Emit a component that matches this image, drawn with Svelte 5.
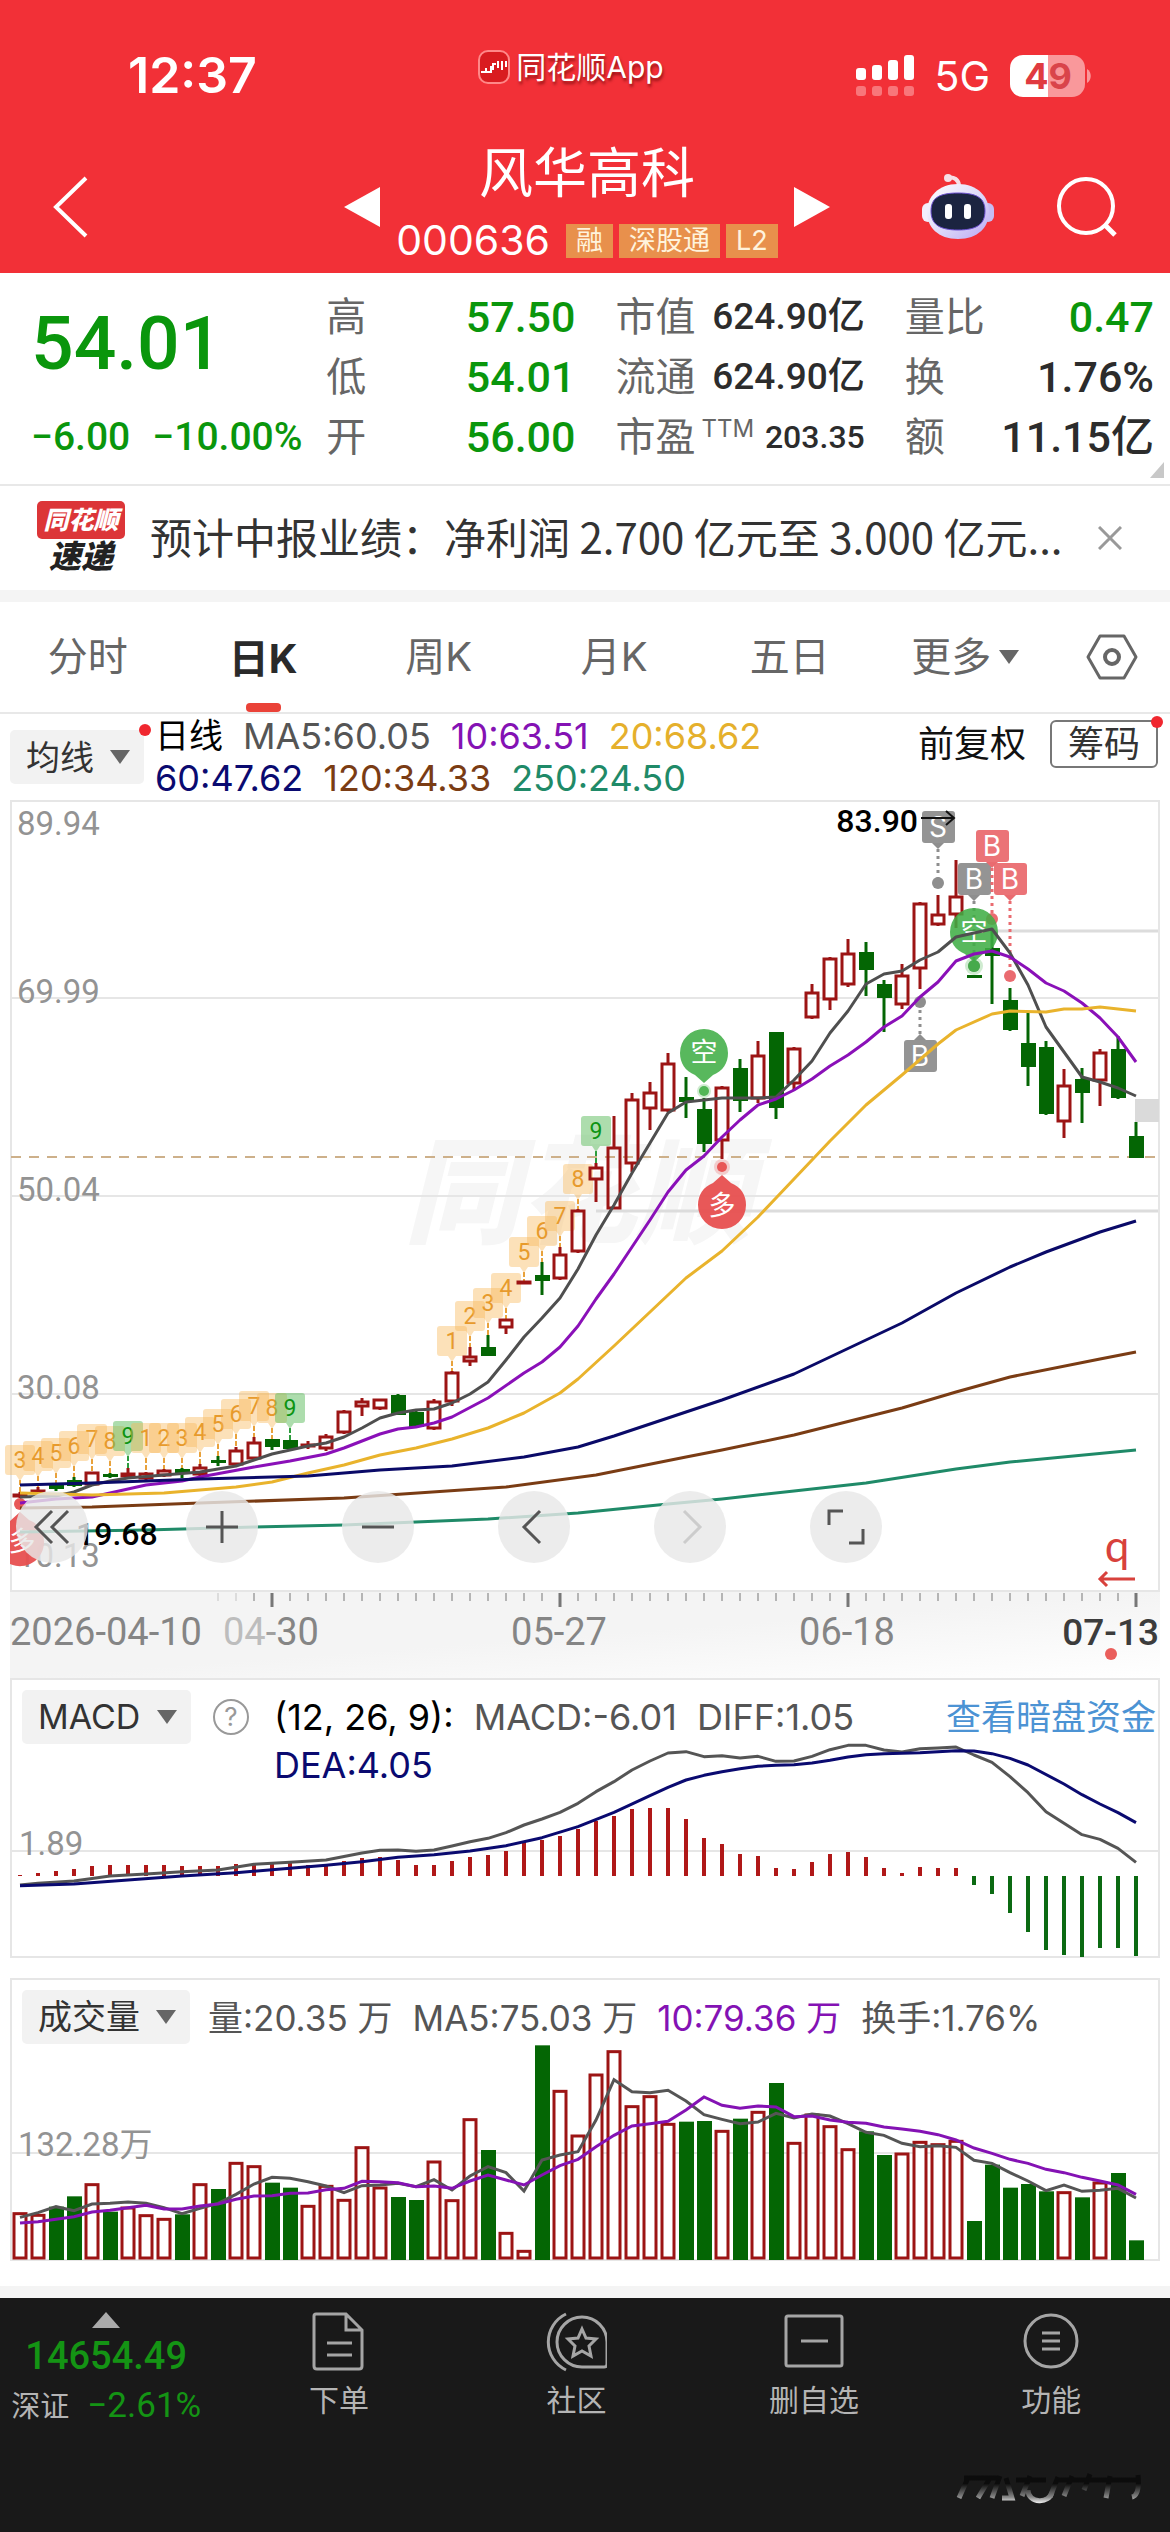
<script>
    const green = '#046604';
    const red = '#9c1414';

    const stats = [
        [
            { label: '高', value: '57.50', cls: 'down' },
            { label: '低', value: '54.01', cls: 'down' },
            { label: '开', value: '56.00', cls: 'down' }
        ],
        [
            { label: '市值', value: '624.90亿', cls: 'mid' },
            { label: '流通', value: '624.90亿', cls: 'mid' },
            { label: '市盈', sup: 'TTM', value: '203.35', cls: 'small' }
        ],
        [
            { label: '量比', value: '0.47', cls: 'down' },
            { label: '换', value: '1.76%', cls: '' },
            { label: '额', value: '11.15亿', cls: '' }
        ]
    ];

    const tabs = ['分时', '日K', '周K', '月K', '五日'];
    let activeTab = '日K';

    // x of the day with index i
    const x = (i) => 20 + i * 18;

    // direction, high, body top, body bottom, low
    const candles = [
        ['r', 692, 694, 697, 698], ['r', 687, 690, 693, 694], ['g', 683, 685, 689, 691],
        ['g', 677, 680, 686, 687], ['r', 672, 672, 685, 685], ['g', 673, 674, 677, 678],
        ['r', 668, 673, 677, 678], ['r', 672, 673, 679, 680], ['r', 669, 670, 676, 677],
        ['g', 668, 669, 674, 678], ['r', 664, 667, 675, 676], ['g', 656, 660, 663, 666],
        ['r', 647, 650, 665, 666], ['r', 637, 642, 659, 659], ['g', 639, 639, 647, 650],
        ['g', 640, 640, 649, 650], ['r', 641, 644, 647, 649], ['r', 634, 636, 649, 651],
        ['r', 610, 611, 633, 634], ['r', 598, 601, 607, 616], ['r', 599, 599, 609, 610],
        ['g', 594, 595, 615, 615], ['g', 611, 612, 627, 627], ['r', 599, 601, 629, 630],
        ['r', 571, 572, 602, 606], ['r', 547, 556, 562, 566], ['g', 535, 547, 556, 556],
        ['r', 519, 519, 528, 534], ['r', 481, 481, 484, 484], ['g', 462, 475, 481, 495],
        ['r', 447, 454, 479, 480], ['r', 409, 410, 452, 453], ['r', 363, 367, 380, 402],
        ['r', 316, 347, 409, 409], ['r', 293, 299, 364, 372], ['r', 282, 292, 309, 330],
        ['r', 253, 263, 311, 312], ['g', 277, 297, 302, 318], ['g', 298, 309, 344, 352],
        ['r', 286, 287, 341, 359], ['g', 259, 268, 301, 312], ['r', 241, 255, 299, 303],
        ['g', 232, 232, 308, 319], ['r', 247, 248, 284, 290], ['r', 184, 192, 218, 219],
        ['r', 157, 158, 200, 210], ['r', 139, 153, 185, 187], ['g', 142, 152, 170, 196],
        ['g', 180, 184, 198, 232], ['r', 164, 175, 205, 209], ['r', 102, 103, 169, 189],
        ['r', 95, 114, 125, 126], ['r', 60, 96, 115, 128], ['g', 175, 175, 178, 178],
        ['g', 130, 148, 156, 204], ['g', 188, 200, 230, 231], ['g', 213, 243, 267, 286],
        ['g', 241, 247, 314, 315], ['r', 269, 285, 322, 338], ['g', 268, 279, 293, 323],
        ['r', 249, 252, 281, 306], ['g', 236, 249, 298, 299], ['g', 322, 336, 358, 358]
    ];

    // moving averages, [index, y]
    const ma5 = [[0, 697], [2, 696], [3, 692], [4, 685], [5, 681], [6, 678], [8, 675], [10, 672], [11, 669], [12, 666], [13, 660], [14, 654], [15, 650], [16, 646], [17, 643], [18, 637], [19, 628], [20, 618], [21, 613], [22, 610], [23, 609], [24, 603], [25, 594], [26, 582], [27, 560], [28, 537], [29, 518], [30, 498], [31, 469], [32, 435], [33, 405], [34, 373], [35, 343], [36, 313], [37, 302], [38, 300], [39, 298], [41, 298], [42, 297], [43, 280], [44, 261], [45, 233], [46, 211], [47, 184], [48, 174], [49, 171], [50, 160], [51, 152], [52, 137], [53, 133], [54, 129], [55, 153], [56, 185], [57, 227], [58, 252], [59, 277], [60, 282], [61, 288], [62, 296]];
    const ma10 = [[0, 703], [2, 699], [4, 697], [5, 693], [7, 685], [9, 681], [10, 677], [13, 667], [15, 661], [17, 654], [18, 648], [20, 634], [21, 629], [22, 627], [23, 623], [24, 617], [26, 598], [28, 573], [29, 562], [30, 547], [31, 526], [32, 499], [33, 474], [34, 447], [35, 420], [36, 392], [37, 370], [38, 356], [39, 337], [40, 320], [41, 305], [42, 299], [43, 290], [44, 279], [45, 266], [46, 255], [47, 242], [48, 227], [49, 216], [50, 197], [51, 182], [52, 161], [53, 154], [54, 151], [55, 157], [56, 169], [57, 183], [58, 191], [59, 203], [60, 218], [61, 237], [62, 262]];
    const ma20 = [[0, 693], [4, 695], [8, 693], [12, 687], [14, 682], [16, 673], [18, 665], [20, 655], [22, 648], [24, 639], [26, 628], [28, 613], [30, 593], [31, 579], [33, 546], [35, 512], [37, 478], [39, 451], [41, 417], [42, 398], [44, 360], [45, 341], [47, 305], [49, 275], [51, 244], [52, 230], [54, 214], [55, 211], [57, 212], [58, 209], [59, 209], [60, 207], [61, 209], [62, 211]];
    const ma60 = [[0, 685], [4, 683], [10, 679], [16, 676], [20, 670], [24, 666], [28, 657], [31, 647], [33, 636], [37, 612], [39, 600], [43, 574], [47, 540], [49, 523], [52, 493], [55, 467], [57, 452], [60, 432], [62, 421]];
    const ma120 = [[0, 708], [4, 707], [10, 703], [18, 698], [27, 687], [32, 675], [37, 657], [39, 650], [43, 635], [49, 608], [52, 592], [55, 577], [60, 559], [62, 552]];
    const ma250 = [[0, 732], [7, 730], [13, 727], [18, 725], [26, 719], [31, 713], [36, 704], [39, 699], [43, 691], [47, 683], [52, 669], [55, 662], [62, 650]];

    const averages = [
        { color: '#4f4f4f', data: ma5 },
        { color: '#8a10b8', data: ma10 },
        { color: '#e9b32c', data: ma20 },
        { color: '#0a0a68', data: ma60 },
        { color: '#7a3c14', data: ma120 },
        { color: '#1f8a68', data: ma250 }
    ];

    // nine-turn counters: index, digit, y
    const counters = [
        [0, 3, 660], [1, 4, 656], [2, 5, 653], [3, 6, 646], [4, 7, 639], [5, 8, 641], [6, 9, 636],
        [7, 1, 638], [8, 2, 638], [9, 3, 638], [10, 4, 632], [11, 5, 624], [12, 6, 614], [13, 7, 606], [14, 8, 608], [15, 9, 608],
        [24, 1, 541], [25, 2, 516], [26, 3, 503], [27, 4, 488], [28, 5, 452], [29, 6, 431], [30, 7, 416], [31, 8, 379], [32, 9, 331]
    ];

    // trades: index, letter, box top, dot y, colour
    const trades = [
        [51, 'S', 11, 83, '#8e8e8e'],
        [53, 'B', 63, 166, '#8e8e8e'],
        [54, 'B', 30, 119, '#ea6b70'],
        [55, 'B', 63, 176, '#ea6b70'],
        [50, 'B', 240, 202, '#8e8e8e']
    ];

    const macd = [1, 3, 5, 7, 10, 11, 11, 11, 11, 10, 10, 10, 12, 13, 12, 13, 11, 11, 15, 18, 19, 16, 11, 11, 15, 19, 21, 25, 34, 36, 40, 47, 55, 60, 67, 68, 68, 57, 38, 32, 22, 20, 8, 7, 14, 22, 24, 19, 8, 3, 9, 8, 8, -9, -18, -37, -56, -74, -79, -81, -72, -72, -80];
    const diff = [[0, 615], [1, 610], [3, 603], [5, 588], [7, 582], [9, 575], [11, 570], [13, 553], [15, 547], [17, 540], [19, 519], [20, 511], [21, 510], [22, 514], [23, 510], [24, 498], [25, 485], [26, 475], [27, 458], [28, 435], [29, 417], [30, 397], [31, 370], [32, 335], [33, 305], [34, 270], [35, 243], [36, 219], [37, 215], [38, 230], [39, 227], [40, 234], [41, 229], [42, 244], [43, 243], [44, 229], [45, 209], [46, 196], [47, 196], [48, 210], [49, 216], [50, 206], [51, 204], [52, 201], [53, 225], [54, 247], [55, 290], [56, 338], [57, 395], [58, 430], [59, 464], [60, 478], [61, 505], [62, 547]];
    const dea = [[0, 617], [3, 612], [6, 600], [9, 588], [12, 578], [15, 565], [17, 556], [19, 545], [21, 532], [23, 524], [25, 513], [27, 497], [29, 473], [31, 440], [33, 397], [35, 347], [36, 322], [37, 300], [38, 286], [39, 275], [40, 266], [41, 259], [42, 256], [43, 254], [44, 249], [45, 241], [46, 231], [47, 224], [48, 221], [50, 218], [52, 212], [53, 213], [54, 221], [55, 235], [56, 255], [58, 312], [59, 344], [60, 372], [61, 398], [62, 428]];

    const volume = [728, 733, 710, 679, 641, 725, 711, 734, 745, 733, 641, 657, 577, 587, 638, 653, 706, 646, 688, 530, 651, 681, 690, 573, 689, 446, 540, 787, 841, 226, 361, 495, 312, 242, 407, 377, 460, 455, 453, 481, 446, 424, 339, 517, 432, 467, 536, 484, 555, 549, 514, 521, 511, 753, 584, 653, 642, 664, 665, 682, 636, 609, 811];
    const vol5 = [742, 728, 710, 722, 702, 700, 696, 700, 713, 731, 715, 700, 673, 642, 622, 625, 635, 648, 668, 647, 645, 640, 650, 629, 660, 618, 590, 608, 663, 570, 555, 545, 450, 329, 365, 368, 361, 393, 434, 448, 461, 456, 430, 444, 432, 438, 461, 487, 496, 520, 530, 527, 532, 571, 580, 608, 633, 662, 645, 664, 661, 655, 684];
    const vol10 = [759, 755, 748, 740, 726, 721, 713, 706, 717, 717, 708, 702, 688, 678, 677, 670, 669, 659, 655, 634, 635, 638, 650, 648, 655, 633, 615, 630, 645, 615, 587, 568, 530, 496, 468, 461, 454, 420, 381, 406, 415, 408, 411, 440, 438, 450, 457, 460, 471, 477, 484, 494, 510, 534, 550, 568, 580, 598, 608, 622, 633, 645, 673];

    const macdY = (v) => 2 + v / 3;
    const volY = (v) => v / 3 - 8;

    const line = (data, y = (v) => v) => data.map(([i, v]) => `${x(i)},${y(v)}`).join(' ');
    const volLine = (data) => data.map((v, i) => `${x(i)},${volY(v)}`).join(' ');

    const ticks = Array.from({ length: 52 }, (_, i) => i + 11);
</script>

<header>
    <div class="status">
        <span class="time">12:37</span>
        <span class="app">
            <svg width="32" height="34" viewBox="0 0 32 34">
                <rect x="1" y="1" width="30" height="32" rx="9" fill="#d91c20" stroke="#f88" stroke-width="2" />
                <path d="M3 22h5v-4M9 22h4v-6M15 20v-6h3M20 18v-7M24 20v-9M28 17v-6" fill="none" stroke="#fff" stroke-width="2" />
            </svg>
            同花顺App
        </span>
        <span class="signal">
            <svg width="58" height="44" viewBox="0 0 58 44">
                <g fill="#fff">
                    <rect x="0" y="14" width="10" height="12" rx="3" />
                    <rect x="16" y="11" width="10" height="15" rx="3" />
                    <rect x="32" y="6" width="10" height="20" rx="3" />
                    <rect x="48" y="1" width="10" height="25" rx="3" />
                </g>
                <g fill="#f8767a">
                    <rect x="0" y="32" width="10" height="10" rx="3" />
                    <rect x="16" y="32" width="10" height="10" rx="3" />
                    <rect x="32" y="32" width="10" height="10" rx="3" />
                    <rect x="48" y="32" width="10" height="10" rx="3" />
                </g>
            </svg>
            <span class="net">5G</span>
            <svg width="81" height="42" viewBox="0 0 81 42">
                <path d="M13 0h25v42H13A13 13 0 0 1 0 29V13A13 13 0 0 1 13 0z" fill="#fff" />
                <path d="M38 0h24a13 13 0 0 1 13 13v16a13 13 0 0 1-13 13H38z" fill="#f9989b" />
                <path d="M77 14c5 3 5 11 0 14z" fill="#f9989b" />
                <text x="38" y="34" text-anchor="middle" class="battery">4<tspan fill="#d9444a">9</tspan></text>
            </svg>
        </span>
    </div>
    <nav class="title-bar">
        <button class="back" aria-label="返回">
            <svg width="36" height="62" viewBox="0 0 36 62"><path d="M33 2L3 31l30 29" fill="none" stroke="#fff" stroke-width="4" /></svg>
        </button>
        <div class="title">
            <button aria-label="上一只"><svg width="36" height="40" viewBox="0 0 36 40"><path d="M36 0v40L0 20z" fill="#fff" /></svg></button>
            <div class="name">
                <h1>风华高科</h1>
                <p>000636 <span>融</span><span>深股通</span><span>L2</span></p>
            </div>
            <button aria-label="下一只"><svg width="36" height="40" viewBox="0 0 36 40"><path d="M0 0v40l36-20z" fill="#fff" /></svg></button>
        </div>
        <div class="tools">
            <button aria-label="助手">
                <svg width="72" height="68" viewBox="0 0 72 68">
                    <defs>
                        <linearGradient id="shell" x1="0" y1="0" x2="1" y2="1">
                            <stop offset="0" stop-color="#fff" />
                            <stop offset="0.55" stop-color="#dcd8f8" />
                            <stop offset="1" stop-color="#b9a6f4" />
                        </linearGradient>
                    </defs>
                    <path d="M25 5c7-2 12 2 12 8" fill="none" stroke="#f6dfe6" stroke-width="4" />
                    <circle cx="26" cy="5" r="4" fill="#f6dfe6" />
                    <rect x="0" y="30" width="12" height="19" rx="6" fill="#f2eefc" />
                    <rect x="60" y="30" width="12" height="19" rx="6" fill="#c6bdf4" />
                    <path d="M36 11c20 0 31 13 31 28S56 66 36 66 5 54 5 39s11-28 31-28z" fill="url(#shell)" />
                    <path d="M36 20c19 0 27 5 27 18S55 57 36 57 9 51 9 38s8-18 27-18z" fill="#1b2440" stroke="#6b4fd0" stroke-width="1" />
                    <rect x="23" y="31" width="7" height="15" rx="3" fill="#fff" />
                    <rect x="42" y="31" width="7" height="15" rx="3" fill="#fff" />
                </svg>
            </button>
            <button aria-label="搜索">
                <svg width="62" height="62" viewBox="0 0 62 62">
                    <circle cx="30" cy="30" r="27" fill="none" stroke="#fff" stroke-width="4" />
                    <path d="M49 49l10 10" stroke="#fff" stroke-width="5" />
                </svg>
            </button>
        </div>
    </nav>
</header>

<main>
    <section class="quote">
        <div class="price">
            <strong>54.01</strong>
            <p><span>−6.00</span><span>−10.00%</span></p>
        </div>
        {#each stats as column}
            <dl>
                {#each column as item}
                    <div>
                        <dt>{item.label}{#if item.sup}<sup>{item.sup}</sup>{/if}</dt>
                        <dd class={item.cls}>{item.value}</dd>
                    </div>
                {/each}
            </dl>
        {/each}
        <svg class="corner" width="14" height="16" viewBox="0 0 14 16"><path d="M14 0v16H0z" fill="#c8c8c8" /></svg>
    </section>

    <section class="news">
        <div class="news-logo">
            <span class="brand">同花顺</span>
            <span class="express">速递</span>
        </div>
        <a href="#news">预计中报业绩：净利润 2.700 亿元至 3.000 亿元...</a>
        <button aria-label="关闭">
            <svg width="24" height="24" viewBox="0 0 24 24"><path d="M1 1l22 22M23 1L1 23" stroke="#999" stroke-width="3" /></svg>
        </button>
    </section>

    <nav class="tabs">
        {#each tabs as tab}
            <button class:active={tab === activeTab} on:click={() => (activeTab = tab)}>{tab}</button>
        {/each}
        <button>更多<i class="arrow"></i></button>
        <button class="settings" aria-label="设置">
            <svg width="52" height="46" viewBox="0 0 52 46">
                <path d="M14 2h24l12 21-12 21H14L2 23z" fill="none" stroke="#666" stroke-width="3" stroke-linejoin="round" />
                <circle cx="26" cy="23" r="7" fill="none" stroke="#666" stroke-width="4" />
            </svg>
        </button>
    </nav>

    <section class="legend">
        <div class="chip dot">
            <select aria-label="主图指标"><option>均线</option></select>
            <i class="arrow"></i>
        </div>
        <div class="values">
            <p><b>日线</b><span class="c5">MA5:60.05</span><span class="c10">10:63.51</span><span class="c20">20:68.62</span></p>
            <p><span class="c60">60:47.62</span><span class="c120">120:34.33</span><span class="c250">250:24.50</span></p>
        </div>
        <button class="plain">前复权</button>
        <button class="outlined dot">筹码</button>
    </section>

    <section class="panel">
        <svg class="chart" viewBox="0 0 1170 792">
            <text x="404" y="434" class="watermark">同花顺</text>
            <g stroke="#e6e6e6" stroke-width="2" fill="none">
                <rect x="11" y="1" width="1148" height="790" />
                <path d="M11 198H1159M11 396H1159M11 594H1159" />
            </g>
            <path d="M990 131H1158M596 411H1158" stroke="#dcdcdc" stroke-width="3" />
            <rect x="1135" y="299" width="24" height="23" fill="#dadada" />
            <path d="M11 357H1158" stroke="#cdb08a" stroke-width="2" stroke-dasharray="10 8" />

            <g class="scale">
                <text x="17" y="35">89.94</text>
                <text x="17" y="203">69.99</text>
                <text x="17" y="401">50.04</text>
                <text x="17" y="599">30.08</text>
                <text x="17" y="767">10.13</text>
            </g>

            {#each counters as [i, digit, y]}
                <path d="M{x(i)} {y + 20}V{candles[i][1]}" stroke={digit === 9 ? '#2c9c3c' : '#e8a23c'} stroke-width="2" stroke-dasharray="5 2" />
                <path
                    d="M{x(i) - 12} {y - 15}h24q3 0 3 3v24q0 3-3 3h-8l-4 6-4-6h-8q-3 0-3-3v-24q0-3 3-3z"
                    fill={digit === 9 ? '#5cbc5c' : '#f9b858'}
                    fill-opacity={digit === 9 ? 0.5 : 0.42}
                />
                <text x={x(i)} y={y + 8} class="counter" fill={digit === 9 ? '#0e9412' : '#e79a2c'}>{digit}</text>
            {/each}

            {#each candles as [dir, high, top, bottom, low], i}
                {#if dir === 'r'}
                    <path d="M{x(i)} {high}V{top}M{x(i)} {bottom}V{low}" stroke={red} stroke-width="3" />
                    <rect x={x(i) - 6} y={top + 1} width="12" height={Math.max(bottom - top - 2, 1)} fill="none" stroke={red} stroke-width="3" />
                {:else}
                    <path d="M{x(i)} {high}V{low}" stroke={green} stroke-width="3" />
                    <rect x={x(i) - 7} y={top} width="15" height={bottom - top} fill={green} />
                {/if}
            {/each}

            {#each trades as [i, letter, top, dot, color]}
                <path d="M{x(i)} {dot > top ? top + 38 : top - 6}V{dot}" stroke={color} stroke-width="3" stroke-dasharray="3 4" />
                <circle cx={x(i)} cy={dot} r="6" fill={color} />
                <rect x={x(i) - 16} y={top} width="33" height="32" rx="3" fill={color} fill-opacity="0.95" />
                {#if dot > top}
                    <path d="M{x(i) - 6} {top + 32}h12l-6 6z" fill={color} />
                {:else}
                    <path d="M{x(i) - 6} {top}h12l-6-6z" fill={color} />
                {/if}
                <text x={x(i)} y={top + 26} class="trade">{letter}</text>
            {/each}

            <g fill="#3fae45" fill-opacity="0.87">
                <path d="M704 283l-9-8c-10-4-15-12-15-22a24 24 0 0 1 48 0c0 10-5 18-15 22z" />
                <path d="M974 162l-9-8c-10-4-15-12-15-22a24 24 0 0 1 48 0c0 10-5 18-15 22z" />
                <circle cx="704" cy="291" r="5" />
                <circle cx="974" cy="166" r="6" />
                <circle cx="704" cy="291" r="7" fill-opacity="0.25" />
                <circle cx="974" cy="166" r="9" fill-opacity="0.25" />
            </g>
            <g fill="#e74f4f" fill-opacity="0.95">
                <path d="M722 375l9 8c10 4 15 12 15 22a24 24 0 0 1-48 0c0-10 5-18 15-22z" />
                <circle cx="722" cy="367" r="5" />
                <circle cx="722" cy="367" r="8" fill-opacity="0.25" />
                <path d="M20 712l9 8c10 4 15 12 15 22a24 24 0 0 1-34 22v-43z" />
                <circle cx="20" cy="704" r="6" />
            </g>
            <g class="bubble">
                <text x="704" y="262">空</text>
                <text x="974" y="141">空</text>
                <text x="722" y="415">多</text>
                <text x="22" y="751">多</text>
            </g>

            {#each averages as average}
                <polyline points={line(average.data)} fill="none" stroke={average.color} stroke-width="3" stroke-linejoin="round" />
            {/each}

            <text x="918" y="32" text-anchor="end" class="extreme">83.90</text>
            <path d="M921 18h32M946 11l8 7-8 7" fill="none" stroke="#111" stroke-width="2" />
            <text x="76" y="745" class="extreme">19.68</text>
            <text x="1117" y="762" text-anchor="middle" class="ex">q</text>
            <path d="M1135 779h-34M1107 772l-7 7 7 7" fill="none" stroke="#d8413c" stroke-width="3" />
        </svg>
        <div class="controls">
            <button aria-label="最早"><svg width="40" height="40" viewBox="0 0 40 40"><path d="M20 4L4 20l16 16M36 4L20 20l16 16" /></svg></button>
            <button aria-label="放大"><svg width="40" height="40" viewBox="0 0 40 40"><path d="M4 20h32M20 4v32" /></svg></button>
            <button aria-label="缩小"><svg width="40" height="40" viewBox="0 0 40 40"><path d="M4 20h32" /></svg></button>
            <button aria-label="向左"><svg width="40" height="40" viewBox="0 0 40 40"><path d="M26 4L10 20l16 16" /></svg></button>
            <button aria-label="向右" disabled><svg width="40" height="40" viewBox="0 0 40 40"><path d="M14 4l16 16-16 16" /></svg></button>
            <button aria-label="全屏"><svg width="40" height="40" viewBox="0 0 40 40"><path d="M3 18V4h14M37 22v14H23" /></svg></button>
        </div>
    </section>

    <svg class="chart" viewBox="0 0 1170 86">
        <defs>
            <linearGradient id="axis" x1="0" y1="0" x2="1" y2="1">
                <stop offset="0.5" stop-color="#f4f4f4" />
                <stop offset="1" stop-color="#fff" />
            </linearGradient>
        </defs>
        <rect x="10" y="0" width="1150" height="86" fill="url(#axis)" />
        {#each ticks as i}
            {#if (i - 14) % 16 === 0}
                <path d="M{x(i)} 1v14" stroke="#777" stroke-width="3" />
            {:else}
                <path d="M{x(i)} 1v8" stroke={i < 13 ? '#dcdcdc' : '#b5b5b5'} stroke-width="2" />
            {/if}
        {/each}
        <g class="dates">
            <text x="10" y="53">2026-04-10</text>
            <text x="271" y="53" text-anchor="middle"><tspan fill="#bdbdbd">04</tspan><tspan fill="#a0a0a0">-</tspan>30</text>
            <text x="559" y="53" text-anchor="middle">05-27</text>
            <text x="847" y="53" text-anchor="middle">06-18</text>
            <text x="1159" y="53" text-anchor="end" class="today">07-13</text>
        </g>
        <circle cx="1111" cy="62" r="6" fill="#ea5f5c" />
    </svg>

    <section class="panel">
        <svg class="chart" viewBox="0 0 1170 280">
            <g stroke="#e6e6e6" stroke-width="2" fill="none">
                <rect x="11" y="1" width="1148" height="278" />
                <path d="M11 173H1159" />
            </g>
            <g class="scale"><text x="19" y="177">1.89</text></g>
            {#each macd as v, i}
                <path d="M{x(i)} 198v{-v}" stroke={v > 0 ? '#b01818' : '#0b6a12'} stroke-width="4" />
            {/each}
            <polyline points={line(diff, macdY)} fill="none" stroke="#555" stroke-width="3" stroke-linejoin="round" />
            <polyline points={line(dea, macdY)} fill="none" stroke="#0a0a70" stroke-width="3" stroke-linejoin="round" />
        </svg>
        <div class="panel-head">
            <div class="chip">
                <select aria-label="副图指标"><option>MACD</option></select>
                <i class="arrow"></i>
            </div>
            <button class="help" aria-label="指标说明">?</button>
            <div class="values wrap">
                <p><b>(12, 26, 9):</b><span class="c5">MACD:-6.01</span><span class="c5">DIFF:1.05</span></p>
                <p><span class="c60">DEA:4.05</span></p>
            </div>
            <a href="#funds">查看暗盘资金</a>
        </div>
    </section>

    <section class="panel volume">
        <svg class="chart" viewBox="0 0 1170 284">
            <g stroke="#e6e6e6" stroke-width="2" fill="none">
                <rect x="11" y="1" width="1148" height="281" />
                <path d="M11 175H1159" />
            </g>
            <g class="scale"><text x="18" y="178">132.28万</text></g>
            {#each volume as v, i}
                {#if candles[i][0] === 'r'}
                    <rect x={x(i) - 6} y={volY(v) + 1} width="12" height={279 - volY(v)} fill="#fff" stroke={red} stroke-width="3" />
                {:else}
                    <rect x={x(i) - 7} y={volY(v)} width="15" height={282 - volY(v)} fill={green} />
                {/if}
            {/each}
            <polyline points={volLine(vol5)} fill="none" stroke="#555" stroke-width="3" />
            <polyline points={volLine(vol10)} fill="none" stroke="#8412b4" stroke-width="3" />
        </svg>
        <div class="panel-head">
            <div class="chip">
                <select aria-label="成交量指标"><option>成交量</option></select>
                <i class="arrow"></i>
            </div>
            <div class="values">
                <p><span class="c5">量:20.35 万</span><span class="c5">MA5:75.03 万</span><span class="c10">10:79.36 万</span><span class="c5">换手:1.76%</span></p>
            </div>
        </div>
    </section>
</main>

<footer>
    <button class="index">
        <svg width="28" height="16" viewBox="0 0 28 16"><path d="M14 0l14 16H0z" fill="#aaa" /></svg>
        <strong>14654.49</strong>
        <span>深证 <em>−2.61%</em></span>
    </button>
    <a href="#order">
        <svg width="62" height="62" viewBox="0 0 62 62">
            <path d="M8 4h30l16 16v36q0 3-3 3H9q-3 0-3-3V6q0-2 2-2zM38 4v16h16M19 33h25M19 45h25" />
        </svg>
        下单
    </a>
    <a href="#community">
        <svg width="62" height="62" viewBox="0 0 62 62">
            <path d="M37 7a25 25 0 0 1 25 25v22q0 3-3 3H37a25 25 0 0 1 0-50zM21 4a31 31 0 0 0 0 56" />
            <path d="M37 19l4 9 10 1-7 7 2 10-9-5-9 5 2-10-7-7 10-1z" />
        </svg>
        社区
    </a>
    <a href="#remove">
        <svg width="62" height="62" viewBox="0 0 62 62">
            <rect x="3" y="6" width="56" height="50" rx="2" />
            <path d="M18 31h27" />
        </svg>
        删自选
    </a>
    <a href="#functions">
        <svg width="62" height="62" viewBox="0 0 62 62">
            <circle cx="31" cy="31" r="26" />
            <path d="M22 23h18M22 31h18M22 39h18" />
        </svg>
        功能
    </a>
    <svg class="stamp" width="190" height="34" viewBox="0 0 190 34">
        <defs>
            <linearGradient id="fade" x1="0" y1="0" x2="0" y2="34" gradientUnits="userSpaceOnUse">
                <stop offset="0.4" stop-color="#0c0c0c" />
                <stop offset="0.8" stop-color="#888" />
                <stop offset="1" stop-color="#fff" />
            </linearGradient>
        </defs>
        <g fill="none" stroke="url(#fade)" stroke-width="5">
            <path d="M3 28l9-20M22 28l12-20M36 28l8-22M46 28h10l-6-20M66 26l8-20M108 26l8-20M128 20l6-16M150 28l4-22M176 27q8-2 6-22M94 27l8-20M8 8h34M60 10h30M100 10h80" />
            <path d="M72 20c0 14 22 14 24 2" />
        </g>
    </svg>
</footer>

<style>
    :global(body) {
        background: #fff;
    }

    header, main, footer {
        font-family: Inter, "Noto Sans CJK SC", sans-serif;
        color: #333;
    }

    button {
        border: none;
        background: none;
        padding: 0;
        font: inherit;
        color: inherit;
        cursor: pointer;
    }

    a {
        color: inherit;
        text-decoration: none;
    }

    svg {
        display: block;
    }

    h1, p, dl, dd {
        margin: 0;
    }

    header {
        background: #f23037;
        color: #fff;
        padding-top: 48px;
    }

    .status {
        display: grid;
        grid-template-columns: 1fr auto 1fr;
        align-items: center;
        height: 56px;
        padding: 0 79px 0 51px;
    }

    .time {
        padding-left: 77px;
        font-size: 50px;
        font-weight: 600;
        line-height: 54px;
        align-self: start;
    }

    .app {
        align-self: start;
        display: flex;
        align-items: center;
        gap: 6px;
        font-size: 30px;
        line-height: 38px;
        text-shadow: 1px 3px 3px rgba(90, 0, 0, 0.6);
    }

    .signal {
        display: flex;
        align-items: center;
        justify-content: flex-end;
        gap: 20px;
    }

    .net {
        font-size: 41px;
    }

    .battery {
        font-size: 36px;
        font-weight: 700;
        fill: #e03a40;
    }

    .title-bar {
        display: grid;
        grid-template-columns: 1fr 486px 1fr;
        align-items: center;
        margin-top: 36px;
        padding-left: 4px;
    }

    .back {
        justify-self: start;
        padding-left: 49px;
    }

    .title {
        display: flex;
        justify-content: space-between;
        align-items: center;
    }

    .name {
        text-align: center;
    }

    .name h1 {
        font-size: 54px;
        font-weight: 400;
        line-height: 68px;
    }

    .name p {
        display: flex;
        align-items: center;
        gap: 6px;
        font-size: 41px;
        line-height: 65px;
    }

    .name p span {
        background: #e8904c;
        color: #fff3dc;
        font-size: 27px;
        line-height: 34px;
        padding: 0 10px;
    }

    .name p span:first-of-type {
        margin-left: 10px;
    }

    .tools {
        display: flex;
        justify-content: flex-end;
        align-items: center;
        gap: 62px;
        padding-right: 52px;
    }

    .quote {
        display: grid;
        grid-template-columns: minmax(0, 255fr) repeat(3, minmax(0, 249fr));
        column-gap: 40px;
        padding: 14px 16px 17px 31px;
        border-bottom: 2px solid #e8e8e8;
        position: relative;
    }

    .corner {
        position: absolute;
        right: 6px;
        bottom: 6px;
    }

    .price {
        font-family: Roboto, "Noto Sans CJK SC", sans-serif;
        color: #0a960c;
        font-weight: 500;
        white-space: nowrap;
    }

    .price strong {
        display: block;
        font-size: 75px;
        font-weight: 500;
        line-height: 112px;
    }

    .price p {
        display: flex;
        gap: 22px;
        margin-top: 8px;
        font-size: 39px;
        line-height: 60px;
    }

    dl div {
        display: flex;
        justify-content: space-between;
        font-size: 40px;
        line-height: 60px;
        white-space: nowrap;
    }

    dt {
        color: #666;
    }

    dt sup {
        font-size: 24px;
        line-height: 24px;
        padding-left: 6px;
    }

    dd {
        font-family: Roboto, "Noto Sans CJK SC", sans-serif;
        font-size: 43px;
        font-weight: 500;
        color: #2c2c2c;
    }

    dd.down {
        color: #0a960c;
    }

    dd.mid {
        font-size: 37px;
    }

    dd.small {
        font-size: 32px;
    }

    .news {
        display: flex;
        align-items: center;
        height: 104px;
        padding: 0 48px 0 37px;
        border-bottom: 12px solid #f4f4f4;
    }

    .news-logo {
        width: 88px;
        font-weight: 900;
        font-style: italic;
        text-align: center;
    }

    .brand {
        display: block;
        background: #dc3538;
        color: #fff;
        border-radius: 5px;
        font-size: 25px;
        line-height: 38px;
    }

    .express {
        display: block;
        font-size: 32px;
        line-height: 36px;
        color: #222;
    }

    .news a {
        flex: 1;
        padding: 0 0 4px 25px;
        font-family: "Noto Sans CJK SC", sans-serif;
        font-size: 42px;
        line-height: 60px;
        white-space: nowrap;
    }

    .tabs {
        display: grid;
        grid-template-columns: repeat(6, 15fr) 10fr;
        height: 110px;
        border-bottom: 2px solid #e8e8e8;
    }

    .tabs button {
        display: grid;
        grid-auto-flow: column;
        place-content: center;
        align-items: center;
        gap: 8px;
        font-size: 40px;
        line-height: 60px;
        color: #666;
    }

    .tabs .active {
        grid-auto-flow: row;
        align-content: end;
        gap: 14px;
        font-weight: 700;
        color: #2a2a2a;
    }

    .tabs .active::after {
        content: "";
        width: 35px;
        height: 9px;
        border-radius: 4px;
        background: #ea4238;
        justify-self: center;
    }

    .arrow {
        border: 10px solid transparent;
        border-top: 14px solid #666;
        border-bottom: none;
    }

    .legend {
        display: flex;
        align-items: flex-start;
        height: 86px;
        padding: 0 12px 0 10px;
    }

    .chip {
        display: inline-grid;
        align-items: center;
        border-radius: 5px;
        background: #f2f2f2;
    }

    .chip select, .chip .arrow {
        grid-area: 1 / 1;
    }

    .chip select {
        appearance: none;
        border: none;
        background: none;
        font: inherit;
        font-size: 34px;
        color: #333;
        height: 54px;
        padding: 0 50px 0 16px;
    }

    .chip .arrow {
        justify-self: end;
        margin-right: 14px;
        pointer-events: none;
    }

    .legend .chip {
        margin-top: 16px;
    }

    .dot {
        position: relative;
    }

    .dot::after {
        content: "";
        position: absolute;
        top: -6px;
        right: -7px;
        width: 12px;
        height: 12px;
        border-radius: 50%;
        background: #f0272f;
    }

    .values {
        flex: 1;
        font-size: 35px;
        line-height: 42px;
        white-space: nowrap;
    }

    .legend .values {
        padding: 1px 0 0 11px;
        font-size: 36px;
    }

    .values p {
        display: flex;
        gap: 20px;
    }

    .values b {
        font-weight: 400;
        color: #000;
    }

    .legend b {
        font-size: 34px;
    }

    .c5 {
        color: #555;
    }

    .c10 {
        color: #8412b4;
    }

    .c20 {
        color: #e5b02c;
    }

    .c60 {
        color: #0a0a70;
    }

    .c120 {
        color: #7a3c14;
    }

    .c250 {
        color: #1f8a68;
    }

    .plain {
        margin: 6px 24px 0 0;
        font-size: 36px;
        line-height: 48px;
        color: #111;
    }

    .outlined {
        margin-top: 6px;
        border: 2px solid #777;
        border-radius: 6px;
        padding: 0 16px;
        font-size: 36px;
        line-height: 44px;
    }

    .panel {
        display: grid;
    }

    .chart {
        width: 100%;
        font-family: Roboto, "Noto Sans CJK SC", sans-serif;
    }

    .panel > * {
        grid-area: 1 / 1;
        min-width: 0;
    }

    .scale text {
        font-size: 33px;
        fill: #939393;
    }

    .watermark {
        font-family: "Noto Sans CJK SC", sans-serif;
        font-size: 116px;
        font-weight: 900;
        font-style: italic;
        fill: #f6f6f6;
    }

    .counter {
        font-size: 23px;
        text-anchor: middle;
    }

    .trade {
        font-family: Inter, sans-serif;
        font-size: 28px;
        fill: #fff;
        text-anchor: middle;
    }

    .bubble text {
        font-size: 27px;
        fill: #fff;
        text-anchor: middle;
    }

    .extreme {
        font-size: 32px;
        font-weight: 500;
        fill: #000;
    }

    .ex {
        font-family: Lato, sans-serif;
        font-size: 44px;
        fill: #d8413c;
    }

    .controls {
        align-self: end;
        display: flex;
        gap: 84px;
        padding: 0 0 29px 16px;
    }

    .controls button {
        display: grid;
        place-items: center;
        width: 72px;
        height: 72px;
        border-radius: 50%;
        background: rgba(232, 232, 232, 0.82);
    }

    .controls button:first-child {
        margin-right: 14px;
    }

    .controls path {
        fill: none;
        stroke: #555;
        stroke-width: 3;
    }

    .controls button:disabled path {
        stroke: #ccc;
    }

    .dates text {
        font-size: 38px;
        fill: #858585;
    }

    .dates .today {
        font-weight: 500;
        font-size: 37px;
        fill: #3c3c3c;
    }

    .panel-head {
        display: flex;
        align-items: flex-start;
        padding: 12px 14px 0 22px;
        font-size: 35px;
        line-height: 54px;
    }

    .panel-head .values {
        padding-left: 18px;
        line-height: 56px;
    }

    .panel-head .values.wrap {
        padding: 3px 0 0 25px;
        font-size: 36px;
        line-height: 48px;
    }

    .panel-head a {
        color: #4c93d4;
    }

    .help {
        width: 36px;
        height: 36px;
        margin: 9px 0 0 22px;
        border: 2px solid #999;
        border-radius: 50%;
        font-size: 26px;
        line-height: 30px;
        color: #999;
    }

    .volume {
        padding: 20px 0 24px;
        border-bottom: 12px solid #f4f4f4;
    }

    footer {
        display: grid;
        grid-template-columns: 220fr repeat(4, 237fr);
        align-items: start;
        min-height: 234px;
        box-sizing: border-box;
        padding-top: 12px;
        background: #191919;
        color: #b4b4b4;
        position: relative;
    }

    footer a {
        display: grid;
        justify-items: center;
        font-size: 30px;
        line-height: 56px;
    }

    footer a svg {
        fill: none;
        stroke: #a5a5a5;
        stroke-width: 3;
    }

    .index {
        display: grid;
        justify-items: center;
        padding: 2px 8px 0 0;
        font-size: 29px;
        line-height: 44px;
    }

    .index strong {
        font-family: Roboto, sans-serif;
        font-size: 38px;
        font-weight: 500;
        color: #149414;
        line-height: 56px;
    }

    .index em {
        margin-left: 10px;
        font-family: Roboto, sans-serif;
        font-size: 35px;
        font-style: normal;
        color: #149414;
    }

    .stamp {
        position: absolute;
        right: 24px;
        bottom: 28px;
    }
</style>
